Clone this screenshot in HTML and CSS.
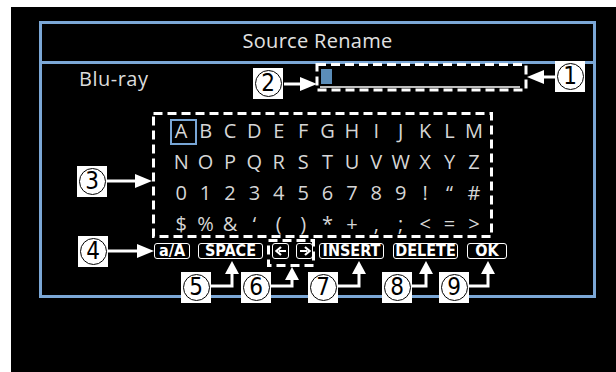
FILE: index.html
```html
<!DOCTYPE html>
<html lang="en">
<head>
  <meta charset="UTF-8">
  <title>Source Rename</title>
  <link rel="stylesheet" href="styles.css">
</head>
<body>
  <div class="page">
    <div class="screen">
      <div class="window">
        <div class="title">Source Rename</div>
        <div class="content">
          <div class="name-row">
            <div class="source">Blu-ray</div>
            <div class="field"><span class="cursor"></span></div>
          </div>

          <div class="keys">
            <span class="sel">A</span><span>B</span><span>C</span><span>D</span><span>E</span><span>F</span><span>G</span><span>H</span><span>I</span><span>J</span><span>K</span><span>L</span><span>M</span>
            <span>N</span><span>O</span><span>P</span><span>Q</span><span>R</span><span>S</span><span>T</span><span>U</span><span>V</span><span>W</span><span>X</span><span>Y</span><span>Z</span>
            <span>0</span><span>1</span><span>2</span><span>3</span><span>4</span><span>5</span><span>6</span><span>7</span><span>8</span><span>9</span><span>!</span><span>&ldquo;</span><span>#</span>
            <span>$</span><span>%</span><span>&amp;</span><span>&lsquo;</span><span>(</span><span>)</span><span>*</span><span>+</span><span>,</span><span>;</span><span>&lt;</span><span>=</span><span>&gt;</span>
          </div>

          <div class="buttons">
            <span class="btn case">a/A</span>
            <span class="btn wide">SPACE</span>
            <span class="arrows">
              <span class="btn small">
                <svg width="12" height="10" viewBox="0 0 12 10"><path d="M11 5H4M6 1L1.5 5L6 9" fill="none" stroke="#fff" stroke-width="2.2"/></svg>
              </span>
              <span class="btn small">
                <svg width="12" height="10" viewBox="0 0 12 10"><path d="M1 5H8M6 1L10.5 5L6 9" fill="none" stroke="#fff" stroke-width="2.2"/></svg>
              </span>
            </span>
            <span class="btn wide">INSERT</span>
            <span class="btn wide">DELETE</span>
            <span class="btn ok">OK</span>
          </div>
        </div>
      </div>
    </div>

    <!-- callout marks drawn over the screen -->
    <svg class="marks" width="616" height="372" viewBox="0 0 616 372">
      <g fill="none" stroke="#fff" stroke-width="3" stroke-dasharray="9 5">
        <rect x="317" y="64.5" width="209" height="25.5"/>
        <rect x="153.5" y="113.5" width="338" height="123"/>
        <rect x="268.5" y="240.5" width="45" height="25"/>
      </g>
      <g fill="none" stroke="#fff" stroke-width="3">
        <path d="M555 77H542"/>
        <path d="M284 84H302"/>
        <path d="M107 181H137"/>
        <path d="M108 251H138"/>
        <path d="M210 286H232V272"/>
        <path d="M271 286H292V278"/>
        <path d="M338 286H359V272"/>
        <path d="M412 286H426V272"/>
        <path d="M468 286H488V272"/>
      </g>
      <g fill="#fff">
        <path d="M527 77L544 70V84Z"/>
        <path d="M317 84L300 77V91Z"/>
        <path d="M152 181L135 174V188Z"/>
        <path d="M154 251L137 244V258Z"/>
        <path d="M232 261L225 274H239Z"/>
        <path d="M292 267L285 280H299Z"/>
        <path d="M359 261L352 274H366Z"/>
        <path d="M426 261L419 274H433Z"/>
        <path d="M488 261L481 274H495Z"/>
      </g>
    </svg>

    <div class="callout c1"><span>1</span></div>
    <div class="callout c2"><span>2</span></div>
    <div class="callout c3"><span>3</span></div>
    <div class="callout c4"><span>4</span></div>
    <div class="callout c5"><span>5</span></div>
    <div class="callout c6"><span>6</span></div>
    <div class="callout c7"><span>7</span></div>
    <div class="callout c8"><span>8</span></div>
    <div class="callout c9"><span>9</span></div>
  </div>
</body>
</html>
```

FILE: styles.css
```css
* { box-sizing: border-box; }

body {
  margin: 0;
  background: #fff;
  font-family: 'Open Sans', 'Noto Sans', sans-serif;
}

.page {
  position: relative;
  width: 616px;
  height: 372px;
  overflow: hidden;
}

.screen {
  margin: 7px 0 0 11px;
  width: 605px;
  height: 365px;
  background: #000;
  padding: 14px 0 0 28px;
}

.window {
  width: 557px;
  height: 277px;
  border: 3px solid #7ba7d6;
}

.title {
  height: 40px;
  border-bottom: 3px solid #7ba7d6;
  color: #e2e2e2;
  font-size: 20px;
  line-height: 34px;
  text-align: center;
  letter-spacing: 0.3px;
}

.name-row {
  display: flex;
  align-items: flex-start;
  height: 28px;
}

.source {
  width: 274px;
  padding: 3px 0 0 37px;
  color: #dcdcdc;
  font-size: 20px;
  line-height: 24px;
  letter-spacing: 0.5px;
}

.field {
  width: 212px;
  height: 26px;
  padding: 5px 0 0 5px;
  background: linear-gradient(#bdbdbd, #bdbdbd) 4px 22px / 200px 2px no-repeat;
}

.cursor {
  display: block;
  width: 11px;
  height: 15px;
  background: #5b8db9;
}

.keys {
  display: grid;
  grid-template-columns: repeat(13, 24.4px);
  grid-auto-rows: 31px;
  margin: 23px 0 0 127px;
  color: #d6d6d6;
  font-size: 20px;
  line-height: 31px;
  text-align: center;
}

.keys span {
  position: relative;
}

.keys .sel::before {
  content: "";
  position: absolute;
  left: 1px;
  top: 4px;
  width: 23px;
  height: 22px;
  border: 2px solid #78a6d6;
}

.buttons {
  display: flex;
  align-items: center;
  margin: 4px 0 0 112px;
  height: 16px;
}

.btn {
  display: flex;
  align-items: center;
  justify-content: center;
  height: 16px;
  border: 1.5px solid #fff;
  border-radius: 3px;
  color: #fff;
  font-family: 'Liberation Sans Narrow', 'DejaVu Sans Condensed', sans-serif;
  font-weight: bold;
  font-size: 16px;
  line-height: 1;
}

.case { width: 36px; margin-right: 8px; }
.wide { width: 65px; margin-right: 9px; }
.ok { width: 40px; }

.arrows {
  display: flex;
  gap: 7px;
  margin: 0 6px 0 0;
}

.small {
  width: 17px;
}

.marks {
  position: absolute;
  left: 0;
  top: 0;
}

.callout {
  position: absolute;
  width: 30px;
  height: 31px;
  background: #fff;
  display: flex;
  align-items: center;
  justify-content: center;
}

.callout span {
  width: 27px;
  height: 27px;
  border: 1.5px solid #000;
  border-radius: 50%;
  color: #000;
  font-family: 'Liberation Sans Narrow', 'DejaVu Sans Condensed', sans-serif;
  font-size: 24px;
  line-height: 24px;
  text-align: center;
}

.c1 { left: 555px; top: 61px; }
.c2 { left: 253px; top: 68px; }
.c3 { left: 77px; top: 166px; }
.c4 { left: 78px; top: 236px; }
.c5 { left: 181px; top: 272px; }
.c6 { left: 241px; top: 272px; }
.c7 { left: 308px; top: 272px; }
.c8 { left: 382px; top: 272px; }
.c9 { left: 439px; top: 272px; }
```
